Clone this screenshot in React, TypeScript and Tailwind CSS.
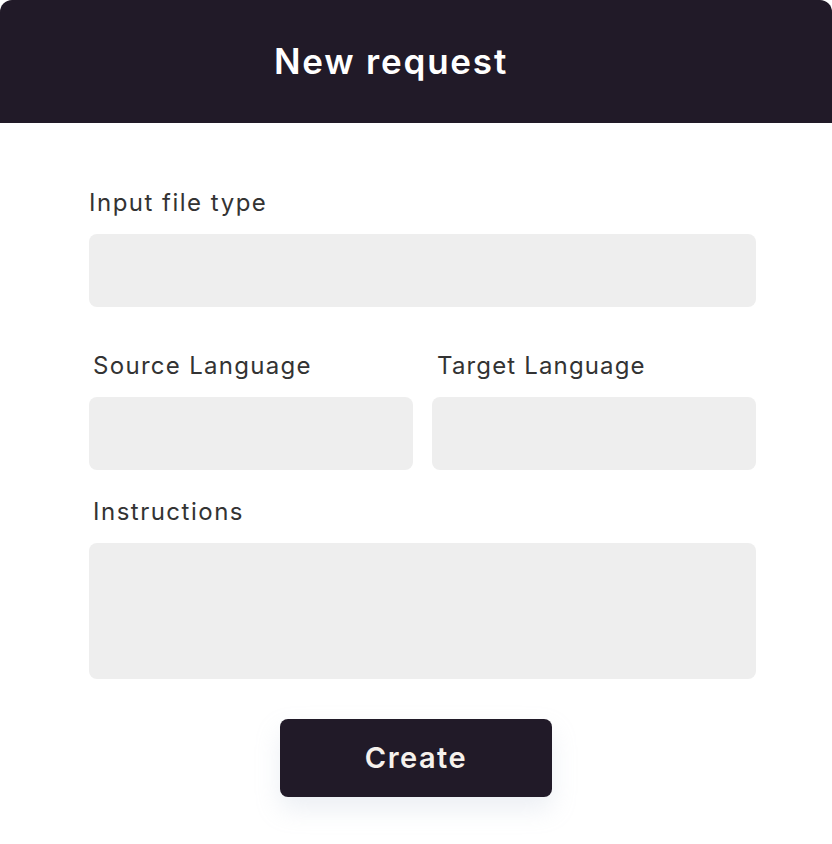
import React from "react";

export default function App() {
  const font = { fontFamily: "Inter, 'Noto Sans', sans-serif" };
  return (
    <div className="w-[832px] h-[844px] bg-white" style={font}>
      <div className="h-[123px] bg-[#211a28] rounded-t-[12px] flex items-center justify-center pr-[50px]">
        <h1 className="text-[35px] font-semibold text-white leading-none tracking-[1.8px]">New request</h1>
      </div>
      <div className="pl-[89px] pr-[76px] pt-[64px] flex flex-col">
        <label className="text-[24px] leading-[32px] text-[#333333] tracking-[1.5px]">Input file type</label>
        <div className="mt-[15px] h-[73px] rounded-[8px] bg-[#eeeeee]" />
        <div className="mt-[43px] grid grid-cols-2 gap-x-[19px]">
          <div className="flex flex-col">
            <label className="pl-[4px] text-[24px] leading-[32px] text-[#333333] tracking-[1.3px]">Source Language</label>
            <div className="mt-[15px] h-[73px] rounded-[8px] bg-[#eeeeee]" />
          </div>
          <div className="flex flex-col">
            <label className="pl-[5px] text-[24px] leading-[32px] text-[#333333] tracking-[1.15px]">Target Language</label>
            <div className="mt-[15px] h-[73px] rounded-[8px] bg-[#eeeeee]" />
          </div>
        </div>
        <label className="mt-[26px] pl-[4px] text-[24px] leading-[32px] text-[#333333] tracking-[1.5px]">Instructions</label>
        <div className="mt-[15px] h-[136px] rounded-[8px] bg-[#eeeeee]" />
        <div className="mt-[40px] flex pl-[191px]">
          <button className="w-[272px] h-[78px] rounded-[8px] bg-[#211a28] text-[#f6f1ec] text-[29px] font-semibold tracking-[1.5px] shadow-[0_12px_24px_rgba(180,190,210,0.25)]">
            Create
          </button>
        </div>
      </div>
    </div>
  );
}
